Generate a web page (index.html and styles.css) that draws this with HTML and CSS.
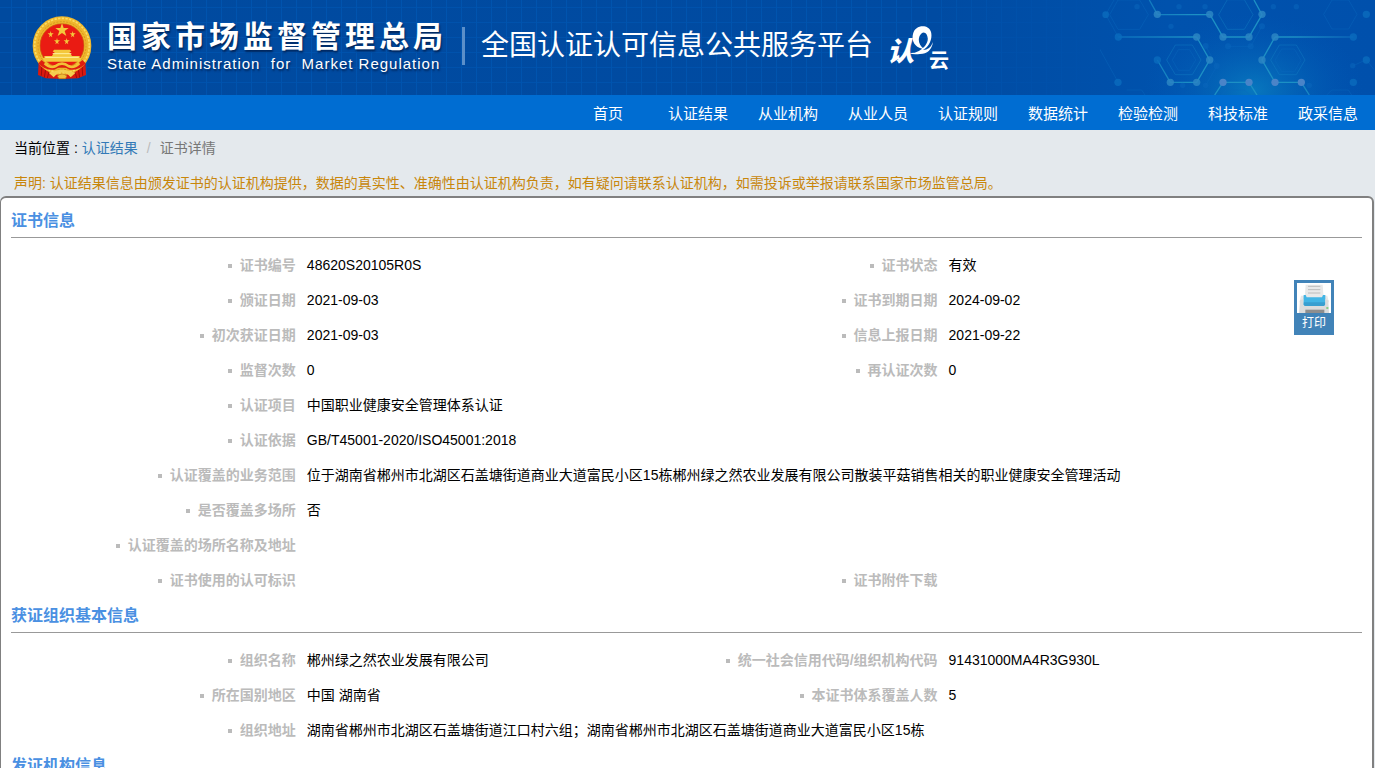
FILE: index.html
```html
<!DOCTYPE html>
<html lang="zh-CN">
<head>
<meta charset="utf-8">
<title>全国认证认可信息公共服务平台</title>
<link rel="stylesheet" href="styles.css">
</head>
<body>
<header class="banner">
  <svg class="banner-art" viewBox="480 0 825 285" aria-hidden="true">
    <defs>
      <radialGradient id="glow"><stop offset="0" stop-color="#0a84c4" stop-opacity=".75"/><stop offset="1" stop-color="#0058b8" stop-opacity="0"/></radialGradient>
      <linearGradient id="beam" gradientUnits="userSpaceOnUse" x1="530" y1="0" x2="1245" y2="0"><stop offset="0" stop-color="#0a6cbc"/><stop offset=".33" stop-color="#1c90c4"/><stop offset=".75" stop-color="#1c90c4"/><stop offset="1" stop-color="#0a62b8"/></linearGradient>
    </defs>
    <ellipse cx="940" cy="270" rx="330" ry="230" fill="url(#glow)"/>
    <g fill="none" stroke="#0a68bc" stroke-width="2" opacity=".65">
      <path d="M497 44l38 67M459 111l75 135M497 44l25-44M534 0h65l26 44-26 44h-65l-25-44z"/>
      <path d="M862-1h51l26 45-26 44h-51l-26-44zM706 135h51l26 45-26 44h-51l-26-44zM1018 135h51l26 45-26 44h-51l-26-44z" stroke="#1480c4"/>
      <path d="M1025 147h38l20 34-20 34h-38l-20-34zM715 149h34l18 31-18 31h-34l-18-31zM1176 0h50l25 43-25 44h-50l-25-44zM864 139h68l34-60M797 138l34 60-34 58M1240 197l39-18 23 30M560 270h45l10 15M1160 285l15-15h50l10 15M845 285l14-15h55l15 15"/>
    </g>
    <g fill="none" stroke="url(#beam)" stroke-width="4">
      <path d="M628 0l24 43M942 0l24 44-39 67h-78l-39-67M652 180l39 67h79l39-67-39-69M1005 111l-39 69 39 67h79l24 38M824 285l25-38h78l24 38"/>
    </g>
    <g fill="url(#beam)"><path d="M652 42h157v4H652zM535 109h235v4H535zM1005 109h235v4H1005z"/></g>
    <g fill="#2c86c4" opacity=".85">
      <circle cx="652" cy="43" r="11"/><circle cx="809" cy="43" r="11"/><circle cx="966" cy="43" r="11"/><circle cx="849" cy="111" r="11"/><circle cx="927" cy="111" r="11"/><circle cx="770" cy="111" r="11"/><circle cx="1005" cy="111" r="11"/><circle cx="809" cy="180" r="11"/><circle cx="966" cy="180" r="11"/><circle cx="691" cy="247" r="11"/><circle cx="770" cy="247" r="11"/>
    </g>
    <g fill="#4a84c8"><circle cx="849" cy="247" r="11"/><circle cx="927" cy="247" r="11"/><circle cx="1005" cy="247" r="11"/><circle cx="1084" cy="247" r="11"/></g>
    <g fill="#0a6cbe" opacity=".8"><circle cx="497" cy="44" r="10"/><circle cx="535" cy="111" r="11"/><circle cx="534" cy="247" r="11"/><circle cx="652" cy="180" r="11"/><circle cx="1240" cy="111" r="11"/><circle cx="1279" cy="43" r="11"/><circle cx="1279" cy="180" r="11"/><circle cx="1240" cy="247" r="11"/></g>
    <g fill="#0a66bc" opacity=".55"><circle cx="591" cy="20" r="8"/><circle cx="717" cy="20" r="8"/><circle cx="795" cy="20" r="8"/><circle cx="693" cy="79" r="8"/><circle cx="1000" cy="20" r="8"/><circle cx="1069" cy="20" r="8"/><circle cx="966" cy="79" r="9"/><circle cx="864" cy="139" r="9"/><circle cx="932" cy="139" r="9"/><circle cx="797" cy="138" r="9"/><circle cx="830" cy="198" r="9"/><circle cx="728" cy="256" r="8"/><circle cx="797" cy="256" r="8"/><circle cx="1108" cy="256" r="8"/><circle cx="1238" cy="197" r="8"/></g>
  </svg>
  <svg class="emblem" viewBox="0 0 180 190" role="img" aria-label="国徽">
    <path d="M20 134l26 14h88l26-14 2 42-24 10-46 2-50-2-24-10z" fill="#d9190f"/>
    <path d="M30 146l-2 32M42 152l-5 32M150 146l2 32M138 152l5 32M52 162l-6 23M128 162l6 23" stroke="#9c0d0b" stroke-width="3"/>
    <circle cx="90" cy="88" r="77" fill="#ec1c14" stroke="#efb62c" stroke-width="22"/>
    <circle cx="90" cy="88" r="82" fill="none" stroke="#fbdc62" stroke-width="5" stroke-dasharray="7 4"/>
    <circle cx="90" cy="88" r="72" fill="none" stroke="#d9981f" stroke-width="3" stroke-dasharray="6 4"/>
    <circle cx="90" cy="88" r="66" fill="#ea1b13" stroke="#c5780f" stroke-width="2"/>
    <g fill="#f4c83c">
      <path d="M90 20l5 15h15l-12 9 5 15-13-9-13 9 5-15-12-9h15z"/>
      <path d="M56 44l2 7h7l-6 5 2 7-5-4-5 4 2-7-6-5h7zM122 44l2 7h7l-6 5 2 7-5-4-5 4 2-7-6-5h7zM75 65l2 7h7l-6 5 2 7-5-4-5 4 2-7-6-5h7zM104 65l2 7h7l-6 5 2 7-5-4-5 4 2-7-6-5h7z"/>
      <path d="M66 100h48l4 6-5 1v5h3l4 7h23v9H37v-9h23l4-7h3v-5l-5-1z"/>
      <path d="M32 125h116l-6 11H38z"/>
    </g>
    <path d="M62 112h56M40 123h100" stroke="#fff0a0" stroke-width="3"/>
    <path d="M24 136q18 20 42 17 24-17 48 0 24 3 42-17" fill="none" stroke="#de1d10" stroke-width="14"/>
    <path d="M38 141q16 15 32 9 20-16 40 0 16 6 32-9" fill="none" stroke="#f2c135" stroke-width="8"/>
    <path d="M50 169l15 14 9-9q15-12 33 0l9 9 15-14-22-5q-19-9-38 0z" fill="#f4ce50"/>
    <path d="M76 179q14-12 29 0l-5 8H81z" fill="#f0bd3a" stroke="#b97318" stroke-width="2"/>
  </svg>
  <div class="agency">
    <span class="agency-zh">国家市场监督管理总局</span>
    <span class="agency-en">State Administration&nbsp; for&nbsp; Market Regulation</span>
  </div>
  <h1 class="platform">全国认证认可信息公共服务平台</h1>
  <svg class="cloud-logo" viewBox="0 0 64 46" role="img" aria-label="认e云">
    <text x="0" y="36" class="logo-ren">认</text>
    <path d="M22 28Q31 29 38 21C44 14 39 5 35 8C30 12 31 20 37 24C29 23 24 17 26 9C28-1 42-1 44 7C46 15 41 22 36 25Q43 25 46 17Q44 29 33 29Q26 30 22 28z"/>
    <text x="42" y="43" class="logo-yun">云</text>
  </svg>
</header>
<nav class="menu">
  <a href="#">首页</a><a href="#">认证结果</a><a href="#">从业机构</a><a href="#">从业人员</a><a href="#">认证规则</a><a href="#">数据统计</a><a href="#">检验检测</a><a href="#">科技标准</a><a href="#">政采信息</a>
</nav>
<div class="crumbs">
  <span>当前位置 :</span><a href="#">认证结果</a><span class="slash">/</span><span class="current">证书详情</span>
</div>
<p class="notice">声明: 认证结果信息由颁发证书的认证机构提供，数据的真实性、准确性由认证机构负责，如有疑问请联系认证机构，如需投诉或举报请联系国家市场监管总局。</p>
<main class="panel">
  <button class="print" type="button">
    <svg viewBox="0 0 102 90" aria-hidden="true">
      <path fill="#fff" d="M0 0h102v90H0z"/>
      <path d="M26 5h51l3 40H23z" fill="#e9e9e9"/>
      <path d="M33 10h37M33 20h37M33 30h37" stroke="#bcbcbc" stroke-width="3"/>
      <path d="M12 38h12l-2 7h60l-3-7h12l5 20H7z" fill="#e8e8e8"/>
      <path d="M20 36h6l3 7h46l3-7h7v28q0 5-5 5H24q-5 0-5-5z" fill="#43b5e5"/>
      <path d="M20 58h65v6q0 5-5 5H24q-5 0-5-5z" fill="#399fd0"/>
      <path d="M9 52l10-4v16q0 5 5 5h56q5 0 5-5V48l9 4 2 38H6z" fill="#dcdcdc"/>
      <path d="M25 80h57v10H25z" fill="#8e8e8e"/>
      <path d="M88 72h6v6h-6z" fill="#86cf8a"/>
    </svg>
    <span>打印</span>
  </button>
  <section>
    <h2>证书信息</h2>
    <table class="details">
      <colgroup><col class="c-label"><col class="c-value"><col class="c-label-b"><col class="c-value-b"></colgroup>
      <tbody>
      <tr><th scope="row">证书编号</th><td>48620S20105R0S</td><th scope="row">证书状态</th><td>有效</td></tr>
      <tr><th scope="row">颁证日期</th><td>2021-09-03</td><th scope="row">证书到期日期</th><td>2024-09-02</td></tr>
      <tr><th scope="row">初次获证日期</th><td>2021-09-03</td><th scope="row">信息上报日期</th><td>2021-09-22</td></tr>
      <tr><th scope="row">监督次数</th><td>0</td><th scope="row">再认证次数</th><td>0</td></tr>
      <tr><th scope="row">认证项目</th><td colspan="3">中国职业健康安全管理体系认证</td></tr>
      <tr><th scope="row">认证依据</th><td colspan="3">GB/T45001-2020/ISO45001:2018</td></tr>
      <tr><th scope="row">认证覆盖的业务范围</th><td colspan="3">位于湖南省郴州市北湖区石盖塘街道商业大道富民小区15栋郴州绿之然农业发展有限公司散装平菇销售相关的职业健康安全管理活动</td></tr>
      <tr><th scope="row">是否覆盖多场所</th><td colspan="3">否</td></tr>
      <tr><th scope="row">认证覆盖的场所名称及地址</th><td colspan="3"></td></tr>
      <tr><th scope="row">证书使用的认可标识</th><td></td><th scope="row">证书附件下载</th><td></td></tr>
      </tbody>
    </table>
  </section>
  <section>
    <h2>获证组织基本信息</h2>
    <table class="details">
      <colgroup><col class="c-label"><col class="c-value"><col class="c-label-b"><col class="c-value-b"></colgroup>
      <tbody>
      <tr><th scope="row">组织名称</th><td>郴州绿之然农业发展有限公司</td><th scope="row">统一社会信用代码/组织机构代码</th><td>91431000MA4R3G930L</td></tr>
      <tr><th scope="row">所在国别地区</th><td>中国 湖南省</td><th scope="row">本证书体系覆盖人数</th><td>5</td></tr>
      <tr><th scope="row">组织地址</th><td colspan="3">湖南省郴州市北湖区石盖塘街道江口村六组；湖南省郴州市北湖区石盖塘街道商业大道富民小区15栋</td></tr>
      </tbody>
    </table>
  </section>
  <section>
    <h2>发证机构信息</h2>
  </section>
</main>
</body>
</html>
```
FILE: styles.css
```css
* { box-sizing: border-box; }
html { overflow: hidden; }
body {
  margin: 0;
  height: 100vh;
  overflow: hidden;
  background: #e4e9ed;
  color: #000;
  font: 14px/20px "Liberation Sans", "Noto Sans CJK SC", sans-serif;
}
a { text-decoration: none; }

.banner {
  position: relative;
  display: flex;
  align-items: center;
  height: 95px;
  padding: 0 0 4px 32px;
  color: #fff;
  background: linear-gradient(90deg, #004a9f 0, #004ba2 68%, #0052ad 85%, #0050ac 100%);
}
.banner::before {
  content: "";
  position: absolute;
  inset: 0;
  background:
    repeating-linear-gradient(90deg, transparent 0 11px, #0058b4 11px 12px, transparent 12px 15px),
    repeating-linear-gradient(180deg, transparent 0 7px, #0056b2 7px 8px, transparent 8px 15px);
  opacity: .7;
  mask-image: linear-gradient(90deg, #000 0, #000 65%, transparent 82%);
}
.banner > * { position: relative; }
.banner > .banner-art {
  position: absolute;
  top: 0;
  right: 0;
  height: 100%;
}
.emblem { width: 60px; height: 64px; margin-top: 4px; }
.agency {
  display: flex;
  flex-direction: column;
  margin-left: 15px;
  padding-right: 15px;
  text-shadow: 1px 2px 2px #00265c;
  white-space: nowrap;
}
.agency-zh { font-size: 30px; line-height: 36px; font-weight: 700; letter-spacing: 4px; }
.agency-en { font-size: 15px; line-height: 18px; letter-spacing: 1px; }
.platform {
  margin: 0;
  padding-left: 16px;
  font-size: 28px;
  line-height: 38px;
  font-weight: 400;
  border-left: 3px solid #5b8fc9;
  white-space: nowrap;
}
.cloud-logo { width: 64px; height: 46px; margin: 4px 0 0 14px; fill: #fff; }
.logo-ren { font-size: 27px; font-weight: 900; font-style: italic; }
.logo-yun { font-size: 20px; font-weight: 700; }

.menu {
  display: flex;
  justify-content: flex-end;
  height: 35px;
  padding-right: 2px;
  background: #006dd2;
}
.menu a {
  width: 90px;
  color: #fff;
  font-size: 15px;
  line-height: 37px;
  text-align: center;
}

.crumbs { display: flex; gap: 4px; padding: 8px 14px; }
.crumbs a { color: #337ab7; }
.crumbs .slash { padding: 0 5px; color: #bbb; }
.crumbs .current { color: #777; }
.notice { margin: 0; padding: 7px 14px 3px; color: #c8860b; }

.panel {
  position: relative;
  min-height: 100vh;
  margin-right: 1px;
  padding: 5px 10px;
  background: #fff;
  border: 2px solid #808080;
  border-left-width: 1px;
  border-radius: 6px;
}
.panel h2 {
  margin: 0 0 10px;
  color: #4a90e2;
  font-size: 16px;
  line-height: 34px;
  padding-top: 1px;
  height: 35px;
  border-bottom: 1px solid #999;
}
.details {
  width: 100%;
  table-layout: fixed;
  border-collapse: collapse;
}
.c-label { width: 297px; }
.c-value { width: 25%; }
.c-label-b { width: 304px; }
.details th, .details td { height: 35px; padding: 0 0 2px; text-align: left; white-space: nowrap; }
.details th { padding-right: 11px; color: #bbb; text-align: right; }
.details th::before {
  content: "";
  display: inline-block;
  width: 4px;
  height: 4px;
  margin-right: 8px;
  background: #bbb;
  vertical-align: middle;
}
.details .c-label { width: 21.9%; }
.details .c-value { width: 25%; }
.details .c-label-b { width: 22.5%; }

.print {
  position: absolute;
  top: 82px;
  right: 38px;
  display: flex;
  flex-direction: column;
  width: 40px;
  padding: 3px;
  color: #fff;
  font: 12px/20px "Liberation Sans", "Noto Sans CJK SC", sans-serif;
  text-align: center;
  background: #4183b8;
  border: 0;
}
.print svg { width: 34px; height: 30px; }
.print span { height: 19px; }
```
